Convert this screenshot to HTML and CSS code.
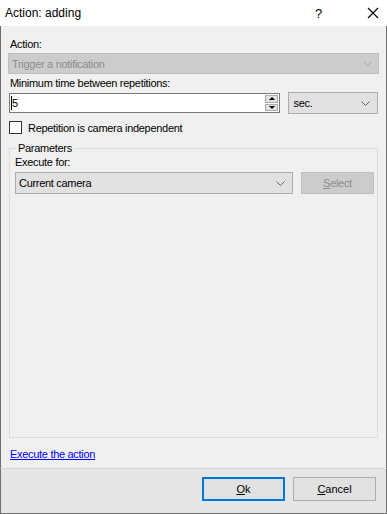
FILE: index.html
```html
<!DOCTYPE html>
<html>
  <head>
    <meta charset="utf-8">
    <title>Action: adding</title>
    <meta name="viewport" content="width=device-width, initial-scale=1">
    <link rel="stylesheet" href="styles.css">
  </head>
  <body>
    <div class="window">
      <div class="titlebar">
        <span class="title">Action: adding</span>
        <span class="help">?</span>
        <span class="close">
          <svg width="12" height="12" viewBox="0 0 12 12">
            <path d="M1 1 L11 11 M11 1 L1 11" stroke="#000" stroke-width="1.1" fill="none" />
          </svg>
        </span>
      </div>

      <div class="content">
        <div class="lbl">Action:</div>
        <div class="combo disabled">
          <span>Trigger a notification</span>
          <svg class="chev" width="9" height="5" viewBox="0 0 9 5">
            <path d="M0.5 0.5 L4.5 4.5 L8.5 0.5" stroke="#a8a8a8" fill="none" />
          </svg>
        </div>

        <div class="lbl gap">Minimum time between repetitions:</div>
        <div class="row">
          <div class="spin">
            <span class="value">5</span>
            <span class="caret"></span>
            <div class="spin-btns">
              <span class="arrow up"></span>
              <span class="arrow down"></span>
            </div>
          </div>
          <div class="combo unit">
            <span>sec.</span>
            <svg class="chev" width="9" height="5" viewBox="0 0 9 5">
              <path d="M0.5 0.5 L4.5 4.5 L8.5 0.5" stroke="#606060" fill="none" />
            </svg>
          </div>
        </div>

        <label class="check">
          <span class="box"></span>
          <span>Repetition is camera independent</span>
        </label>

        <fieldset class="group">
          <legend>Parameters</legend>
          <div class="lbl">Execute for:</div>
          <div class="row">
            <div class="combo camera">
              <span>Current camera</span>
              <svg class="chev" width="9" height="5" viewBox="0 0 9 5">
                <path d="M0.5 0.5 L4.5 4.5 L8.5 0.5" stroke="#606060" fill="none" />
              </svg>
            </div>
            <div class="btn-disabled"><u>S</u>elect</div>
          </div>
        </fieldset>

        <a class="link" href="#">Execute the action</a>
      </div>

      <div class="footer">
        <button class="btn default"><u>O</u>k</button>
        <button class="btn"><u>C</u>ancel</button>
      </div>
    </div>
  </body>
</html>
```

FILE: styles.css
```css
* {
  box-sizing: border-box;
}

body {
  margin: 0;
  font-family: "Liberation Sans", Arial, sans-serif;
  font-size: 11px;
  color: #000;
}

.window {
  width: 387px;
  height: 514px;
  display: flex;
  flex-direction: column;
  background: #f0f0f0;
}

.titlebar {
  height: 26px;
  background: #fff;
  display: flex;
  align-items: center;
  padding-left: 5px;
  font-size: 12px;
}

.title {
  flex: 1;
}

.help {
  width: 26px;
  font-size: 13px;
  margin-right: 20px;
}

.close {
  width: 26px;
  display: flex;
  align-items: center;
  padding-left: 6px;
}

.content {
  flex: 1;
  display: flex;
  flex-direction: column;
  padding: 12px 8px 0 8px;
  border-left: 1px solid #6e6e6e;
  border-right: 1px solid #6e6e6e;
  letter-spacing: -0.3px;
}

.lbl {
  height: 13px;
  line-height: 13px;
  padding-left: 1px;
}

.lbl.gap {
  margin-top: 3px;
}

.combo {
  height: 21px;
  margin-top: 2px;
  display: flex;
  align-items: center;
  justify-content: space-between;
  padding: 0 7px 0 3px;
  background: #e1e1e1;
  border: 1px solid #adadad;
}

.combo.disabled {
  margin-left: -1px;
  margin-right: -1px;
  padding-right: 6px;
  background: #cccccc;
  border-color: #bfbfbf;
  color: #8d8d8d;
}

.row {
  display: flex;
  align-items: center;
  margin-top: 2px;
}

.spin {
  position: relative;
  width: 273px;
  height: 20px;
  background: #fff;
  border: 1px solid #7a7a7a;
  display: flex;
  align-items: center;
  padding-left: 2px;
}

.value {
  flex: 1;
}

.caret {
  position: absolute;
  left: 1px;
  top: 2px;
  width: 1px;
  height: 14px;
  background: #000;
}

.spin-btns {
  width: 13px;
  height: 16px;
  margin-right: 1px;
  display: flex;
  flex-direction: column;
  gap: 1px;
}

.arrow {
  flex: 1;
  background: #e1e1e1;
  border: 1px solid #adadad;
  display: flex;
  align-items: center;
  justify-content: center;
}

.arrow::after {
  content: "";
  border-left: 3px solid transparent;
  border-right: 3px solid transparent;
}

.arrow.up::after {
  border-bottom: 3px solid #000;
}

.arrow.down::after {
  border-top: 3px solid #000;
}

.combo.unit {
  width: 90px;
  height: 22px;
  margin: 0 0 0 8px;
  padding-left: 4px;
}

.check {
  display: flex;
  align-items: center;
  margin-top: 6px;
  height: 15px;
}

.box {
  width: 13px;
  height: 13px;
  border: 1px solid #333;
  background: #fff;
  margin-right: 6px;
}

.group {
  flex: 1;
  min-height: 0;
  margin: 7px 0 0 0;
  padding: 0 3px 0 5px;
  border: 1px solid #dcdcdc;
}

.group legend {
  padding: 0 2px;
  margin-left: 1px;
  line-height: 13px;
}

.group .lbl {
  padding-left: 0;
  margin-top: 1px;
}

.combo.camera {
  flex: 1;
  height: 22px;
  margin-top: 1px;
}

.btn-disabled {
  width: 73px;
  height: 22px;
  margin-top: 1px;
  margin-left: 8px;
  background: #cccccc;
  border: 1px solid #bfbfbf;
  color: #8d8d8d;
  display: flex;
  align-items: center;
  justify-content: center;
}

.link {
  color: #0000ff;
  margin: 10px 0 7px 0;
  padding-left: 1px;
  line-height: 13px;
  align-self: flex-start;
}

.footer {
  height: 46px;
  background: #e6e6e6;
  border: 1px solid #6e6e6e;
  border-top: 1px solid #d6d6d6;
  display: flex;
  justify-content: flex-end;
  align-items: flex-start;
  padding: 8px 10px 0 0;
  gap: 8px;
}

.btn {
  width: 83px;
  height: 24px;
  background: #e1e1e1;
  border: 1px solid #adadad;
  font-family: "Liberation Sans", Arial, sans-serif;
  font-size: 11px;
  padding: 0;
  color: #000;
}

.btn.default {
  border: 2px solid #0078d7;
}
```
